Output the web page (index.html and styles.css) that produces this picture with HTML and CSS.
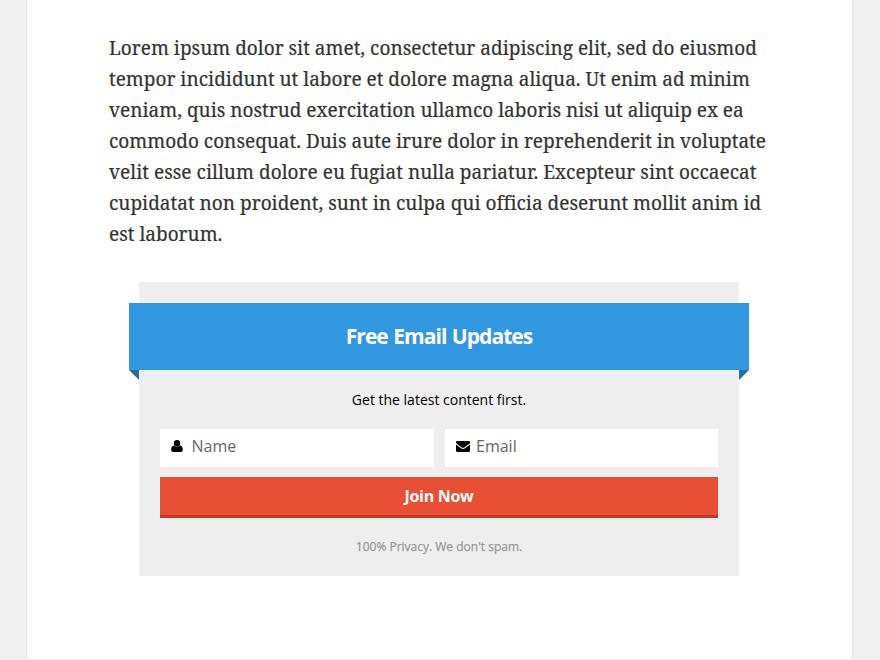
FILE: index.html
```html
<!DOCTYPE html>
<html lang="en">
<head>
<meta charset="utf-8">
<title>Free Email Updates</title>
<link rel="stylesheet" href="styles.css">
</head>
<body>
<main class="page">
<p class="copy">Lorem ipsum dolor sit amet, consectetur adipiscing elit, sed do eiusmod<br>tempor incididunt ut labore et dolore magna aliqua. Ut enim ad minim<br>veniam, quis nostrud exercitation ullamco laboris nisi ut aliquip ex ea<br>commodo consequat. Duis aute irure dolor in reprehenderit in voluptate<br><span class="loose">velit esse cillum dolore eu fugiat nulla pariatur. Excepteur sint occaecat</span><br>cupidatat non proident, sunt in culpa qui officia deserunt mollit anim id<br>est laborum.</p>
<section class="optin">
<h2 class="ribbon">Free Email Updates</h2>
<p class="lead">Get the latest content first.</p>
<form class="form">
<div class="fields">
<label class="field"><svg class="icon" viewBox="0 0 14 14"><path d="M6 1a3.200 3.200 0 0 1 3.200 3.200A3.200 3.200 0 0 1 6 7.400a3.200 3.200 0 0 1-3.200-3.200A3.200 3.200 0 0 1 6 1zM2.900 6.500c1.800 1.700 4.400 1.700 6.200 0 2 .1 2.700 2.400 2.700 4.300C11.800 12.200 11 13 9.800 13H2.200C1 13 .2 12.200.2 10.800.2 8.900.9 6.600 2.900 6.500z"/></svg><span class="name">Name</span></label>
<label class="field"><svg class="icon" viewBox="0 0 14 14"><path d="M1.200 2h11.600C13.600 2 14 2.500 14 3.200c0 .9-.6 1.600-1.300 2.100L8.300 8.400c-.9.6-1.700.6-2.600 0L1.300 5.300C.6 4.800 0 4 0 3.300 0 2.500.5 2 1.200 2zM0 5.600l5 3.600c1.400 1 2.600 1 4 0l5-3.600v6.200c0 .7-.5 1.200-1.200 1.200H1.200C.5 13 0 12.500 0 11.800z"/></svg><span>Email</span></label>
</div>
<button class="join" type="button">Join Now</button>
</form>
<p class="privacy">100% Privacy. We don't spam.</p>
</section>
</main>
</body>
</html>
```
FILE: styles.css
```css
* { box-sizing: border-box; }
body { margin: 0; background: #f0f0f0; font-family: "Open Sans", sans-serif; }
.page { width: 827px; height: 660px; margin-left: 26px; padding: 32px 82px 0; background: #fff; border: 1px solid #e3e3e3; border-top: 0; border-bottom-color: #f0f0f0; }
.copy { margin: 0; color: #333; font: 20px/31px "Noto Serif", "Droid Serif", "Liberation Serif", serif; font-variant-ligatures: none; white-space: nowrap; transform: scaleX(.9505); transform-origin: left; -webkit-text-stroke: .2px #333; }
.loose { letter-spacing: .03px; }
.optin { width: 600px; height: 294px; margin: 33px 0 0 30px; padding: 21px 21px 0; background: #eee; }
.ribbon { position: relative; height: 67px; margin: 0 -31px; background: #3197e1; color: #fff; font-size: 21px; line-height: 67px; text-align: center; letter-spacing: -.96px; word-spacing: 1px; }
.ribbon::before, .ribbon::after { content: ""; position: absolute; top: 100%; width: 10px; height: 10px; background: #236fa5; }
.ribbon::before { left: 0; clip-path: polygon(0 0, 100% 0, 100% 100%); }
.ribbon::after { right: 0; clip-path: polygon(0 0, 100% 0, 0 100%); }
.lead { margin: 20px 0 19px; font-size: 14px; line-height: 20px; text-align: center; }
.fields { display: grid; grid-template-columns: 274px 273px; gap: 11px; }
.field { display: flex; height: 38px; align-items: center; padding: 0 11px 4px; background: #fff; color: #666; font-size: 16px; }
.icon { width: 14px; height: 14px; margin: 0 6px 1px 0; fill: #000; }
.name { margin-left: .5px; }
.join { display: block; width: 100%; height: 41px; margin-top: 10px; padding: 0; border: 0; border-bottom: 3px solid #bd3b24; background: #e94f35; color: #fff; font: bold 16px "Open Sans", sans-serif; letter-spacing: -.3px; }
.privacy { margin: 20px 0 0; color: #999; font-size: 12px; line-height: 18px; text-align: center; -webkit-text-stroke: .25px #999; }
```
